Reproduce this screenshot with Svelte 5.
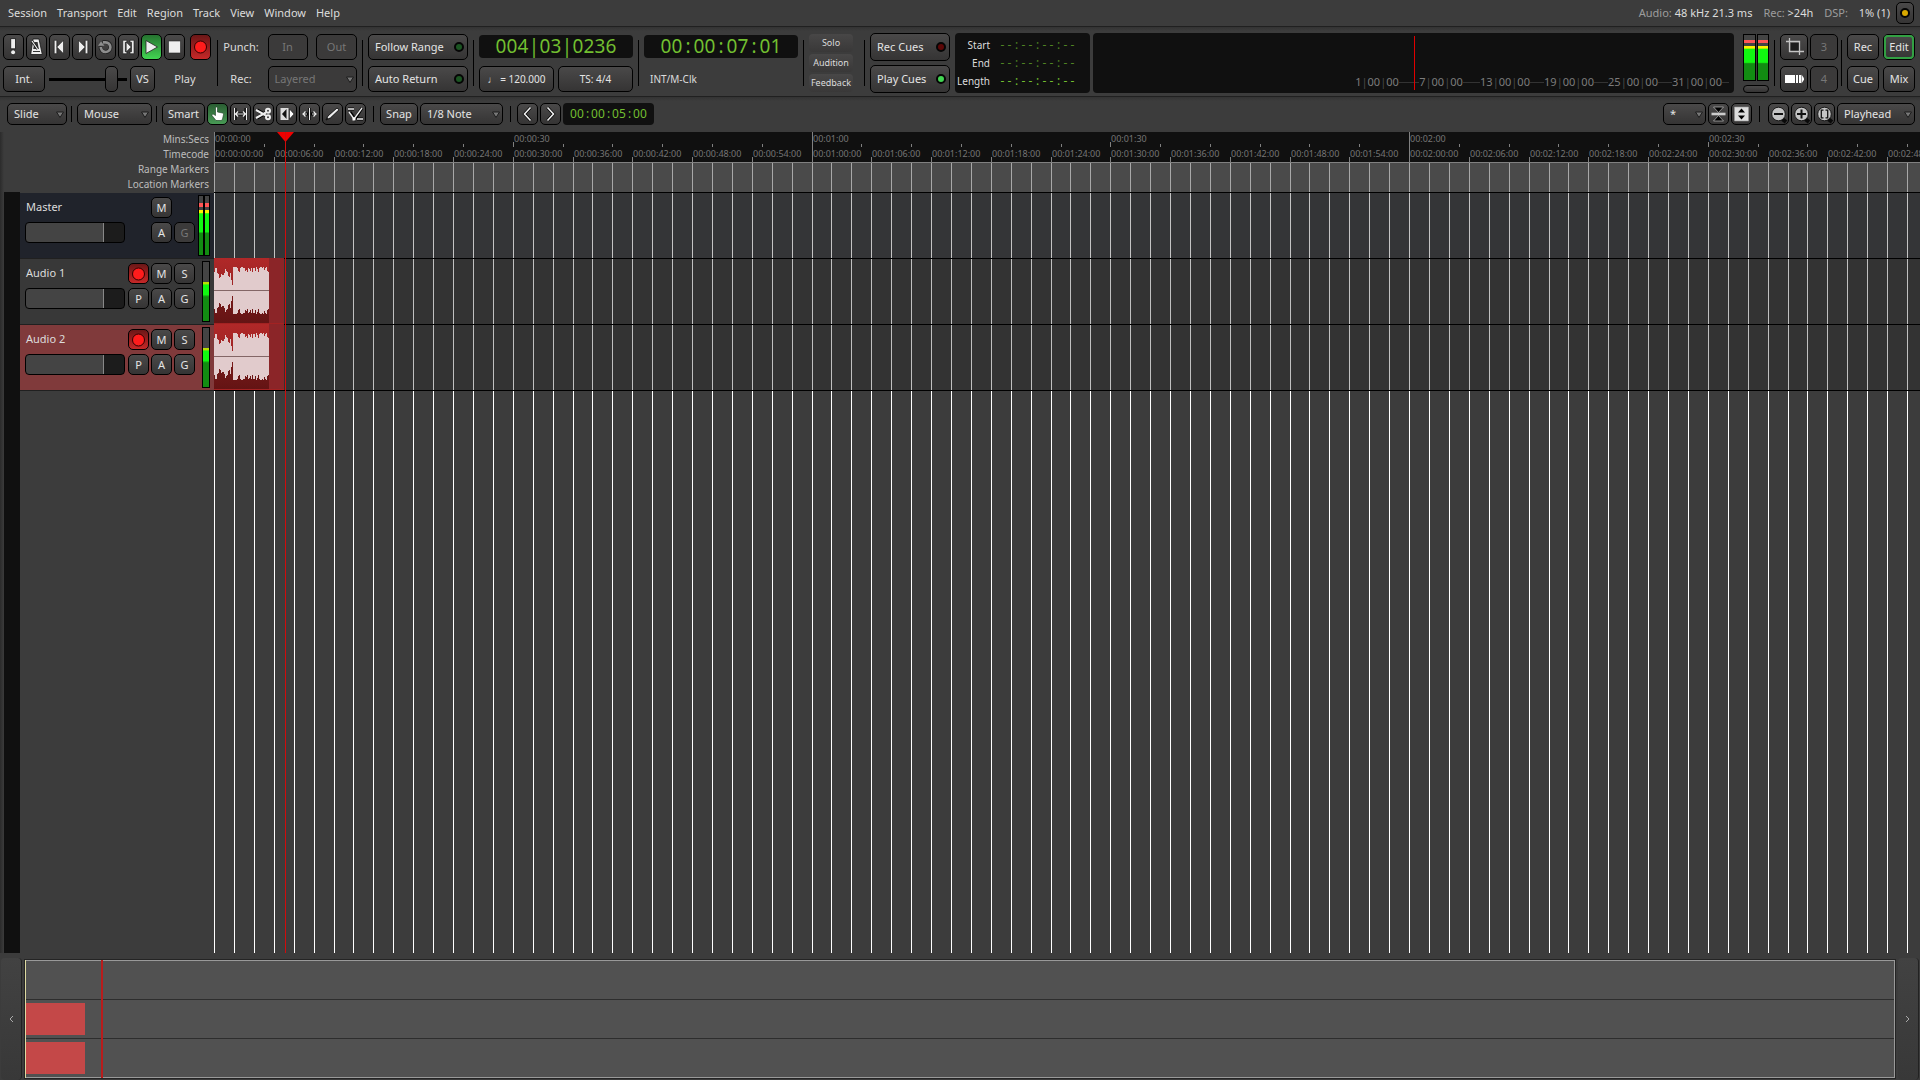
<script lang="ts">
  const menus = ['Session', 'Transport', 'Edit', 'Region', 'Track', 'View', 'Window', 'Help'];

  const transport = [
    { icon: 'panic', label: 'MIDI panic' },
    { icon: 'metronome', label: 'Metronome' },
    { icon: 'start', label: 'Go to start' },
    { icon: 'end', label: 'Go to end' },
    { icon: 'loop', label: 'Loop' },
    { icon: 'range', label: 'Play range' },
    { icon: 'play', label: 'Play', state: 'playing' },
    { icon: 'stop', label: 'Stop' },
    { icon: 'rec', label: 'Record', state: 'armed apart' }
  ];

  const tools = [
    { icon: 'grab', label: 'Grab', state: 'selected' },
    { icon: 'span', label: 'Range' },
    { icon: 'cut', label: 'Cut' },
    { icon: 'stretch', label: 'Stretch' },
    { icon: 'audition', label: 'Grid' },
    { icon: 'draw', label: 'Draw' },
    { icon: 'edit', label: 'Internal edit' }
  ];

  const ranges = [
    { name: 'Start', dim: true },
    { name: 'End', dim: true },
    { name: 'Length', dim: false }
  ];

  const bars = [1, 7, 13, 19, 25, 31];

  const tracks = [
    { name: 'Master', kind: 'master' },
    { name: 'Audio 1', kind: 'audio' },
    { name: 'Audio 2', kind: 'audio selected' }
  ];

  const rulers = ['Mins:Secs', 'Timecode', 'Range Markers', 'Location Markers'];

  // timeline scale
  const pps = 9.959;
  let width = $state(0);
  const at = (t: number) => Math.round(t * pps);
  const every = (step: number, total: number) =>
    Array.from({ length: Math.ceil(total / pps / step) }, (_, i) => i * step);
  const pad = (n: number) => String(n).padStart(2, '0');
  const clock = (t: number) => `00:${pad(Math.floor(t / 60))}:${pad(t % 60)}`;

  const playhead = 71;

  // peak heights of one channel, one value per pixel
  const peaks = [
    18, 22, 22, 17, 16, 12, 13, 16, 15, 15, 17, 21, 19, 18, 14, 13, 17, 10, 5,
    23, 23, 23, 23, 22, 19, 18, 22, 23, 23, 22, 22, 19, 20, 18, 22, 21, 19, 22,
    18, 22, 22, 19, 23, 21, 18, 22, 23, 23, 22, 23, 20, 22, 23, 19, 18
  ];
  const wave =
    'M0 32' +
    peaks.map((p, i) => `V${32 - p}H${i + 1}`).join('') +
    peaks.map((_, i) => `V${33 + peaks[54 - i]}H${54 - i}`).join('') +
    'Z';
</script>

{#snippet icon(name)}
  <svg class="icon" viewBox="0 0 19 20" width="19" height="20" aria-hidden="true">
    {#if name === 'panic'}
      <g fill="#eee" stroke="#111" stroke-width=".8"><path d="M6.7 1.6h4.8v10.2H6.7z" /><circle cx="9.1" cy="15.3" r="2.5" /></g>
    {:else if name === 'metronome'}
      <path d="M6 2h6l3.3 15.5H3.700z" fill="#eee" stroke="#111" stroke-width=".8" />
      <path d="M7.600 5h3l1.200 7H6.200z" fill="#333" />
      <path d="M10.500 12 5 4" stroke="#111" stroke-width="2.600" /><path d="M10.500 12 5 4" stroke="#eee" stroke-width="1.300" />
      <path d="M6 14.500h7" stroke="#333" />
    {:else if name === 'start'}
      <g fill="#eee" stroke="#111" stroke-width=".6"><path d="M4.200 3.300h2.600v13.400H4.200z" /><path d="M13.500 3.300v13.400L6.800 10z" /></g>
    {:else if name === 'end'}
      <g fill="#eee" stroke="#111" stroke-width=".6"><path d="M12.200 3.300h2.600v13.400h-2.600z" /><path d="M5.500 3.300v13.400l6.700-6.700z" /></g>
    {:else if name === 'loop'}
      <path d="M4.600 9.500A5 5 0 1 0 9.500 5H6.500" fill="none" stroke="#222" stroke-width="4" />
      <path d="M4.800 10A4.800 4.800 0 1 0 9.500 5.400H7" fill="none" stroke="#8d8d8d" stroke-width="2.600" />
      <path d="M2 8.800h6.500L5 4.500z" fill="#8d8d8d" />
    {:else if name === 'range'}
      <g fill="#eee" stroke="#111" stroke-width=".6"><path d="M3.800 3.300h4v2H6.300v9.400h1.500v2h-4z" /><path d="M11 3.300h4v13.400h-4v-2h1.500V5.300H11z" /><path d="M7.200 5v10l5-5z" /></g>
    {:else if name === 'play'}
      <path d="M4 3.500v13l11.500-6.500z" fill="#eee" stroke="#222" stroke-width=".8" />
    {:else if name === 'stop'}
      <path d="M3.500 4h12v12h-12z" fill="#eee" stroke="#222" stroke-width=".6" />
    {:else if name === 'rec'}
      <circle cx="9.500" cy="10" r="6" fill="#ff1c1c" stroke="#300" stroke-width="1" />
    {:else if name === 'grab'}
      <path d="M7.500 3.500q1-1 2 0V8l5 1q1 .4 1 1.500l-1 4.500-1 1.500H8l-4-5q0-2 1.500-1.200l2 1.200z" fill="#fff" stroke="#1a3a20" stroke-width=".6" />
    {:else if name === 'span'}
      <g fill="none" stroke="#000" stroke-width="3"><path d="M4 4v12M15 4v12M5 10h9" /></g>
      <g fill="none" stroke="#eee" stroke-width="1.200"><path d="M3.500 4v12M15.500 4v12M4 10h11M7 7.500 4.500 10 7 12.500M12 7.500l2.500 2.500-2.500 2.500" /></g>
    {:else if name === 'cut'}
      <g fill="none" stroke="#000" stroke-width="3.600"><path d="M3 6l10 6M3 14l10-6" /></g>
      <g fill="none" stroke="#eee" stroke-width="2"><path d="M2 6l10 5.500M2 14l10-5.500" /><circle cx="14" cy="6.800" r="2" /><circle cx="14" cy="13.200" r="2" /></g>
    {:else if name === 'stretch'}
      <path d="M3.500 4h8v12h-8z" fill="#ddd" /><path d="M9.500 5v10L5 10z" fill="#111" /><path d="M12.500 5v10l4.500-5z" fill="#fff" stroke="#111" stroke-width=".6" />
    {:else if name === 'audition'}
      <g fill="none" stroke="#000" stroke-width="3"><path d="M9.500 4v12M3 10h13" /></g>
      <g fill="none" stroke="#eee" stroke-width="1.200"><path d="M9.500 4v12M3 10h4M12 10h4M5.500 7.500 3 10l2.500 2.500M13.500 7.500 16 10l-2.500 2.500" /></g>
    {:else if name === 'draw'}
      <path d="M3 16l2-4L14 4l2 1.800-8.500 8z" fill="#eee" stroke="#000" stroke-width=".8" />
      <path d="M3 16l1-2.500 1.500 1.500z" fill="#111" />
    {:else if name === 'edit'}
      <g fill="none" stroke="#000" stroke-width="3"><path d="M2 5h6M4 8l5 7 7-11M11 15h6" /></g>
      <g fill="none" stroke="#eee" stroke-width="1.400"><path d="M2 5h6M3 8l5 7 8-11M11 15h6" /></g>
      <path d="M6.500 13.500h3v3h-3z" fill="#fff" />
    {:else if name === 'prev'}
      <path d="M12.500 3.500 6.500 10l6 6.500" fill="none" stroke="#000" stroke-width="3" /><path d="M12.500 3.500 6.500 10l6 6.500" fill="none" stroke="#eee" stroke-width="1.600" />
    {:else if name === 'next'}
      <path d="M6.500 3.500l6 6.500-6 6.500" fill="none" stroke="#000" stroke-width="3" /><path d="M6.500 3.500l6 6.500-6 6.500" fill="none" stroke="#eee" stroke-width="1.600" />
    {:else if name === 'crop'}
      <path d="M6 6h8v8H6z" fill="#1d1d1d" />
      <path d="M4.500 1v13.500H19M1 4.500h13.500V18" fill="none" stroke="#c4c4c4" stroke-width="1.300" />
    {:else if name === 'cueout'}
      <path d="M0 6h10v8H0zM11 6h2v8h-2zM14 6h2v8h-2z" fill="#fff" /><path d="M16.500 5.500v9l3-4.500z" fill="#fff" />
    {:else if name === 'shrink'}
      <path d="M4.500 3h10L9.500 8.500zM4.500 17h10l-5-5.500z" fill="#000" stroke="#bbb" stroke-width=".7" />
      <path d="M2.500 8.700h14v2.600h-14z" fill="#ccc" />
    {:else if name === 'expand'}
      <path d="M2.500 3h14v14h-14z" fill="#ddd" stroke="#999" stroke-width=".6" />
      <path d="M6 8.500h7l-3.500-4zM6 11.500h7l-3.500 4z" fill="#000" />
    {:else}
      <path d="M12 14l5 4" stroke="#0a0a0a" stroke-width="4" />
      <circle cx="9.500" cy="10" r="6.800" fill="#c4c4c4" stroke="#181818" stroke-width="1" />
      {#if name === 'out'}<path d="M5 9h9v2H5z" fill="#111" />{/if}
      {#if name === 'in'}<path d="M5 9h3.500V5.500h2V9H14v2h-3.500v3.500h-2V11H5z" fill="#111" />{/if}
      {#if name === 'fit'}<path d="M8.500 6.200H6.300v7.600h2.200M10.500 6.200h2.200v7.600h-2.200" fill="none" stroke="#111" stroke-width="1.300" />{/if}
    {/if}
  </svg>
{/snippet}

{#snippet readout(text)}
  {#each text.split('') as char}<span class="cell">{char}</span>{/each}
{/snippet}

{#snippet choice(value, label, size)}
  <label class="choice {size}">
    <select aria-label={label} disabled={size === 'layer'}>
      <option>{value}</option>
    </select>
    <svg viewBox="0 0 8 7" width="8" height="7" aria-hidden="true"><path d="M.5 1h7L4 6.500z" fill="#777" stroke="#1c1c1c" /></svg>
  </label>
{/snippet}

{#snippet meter(size)}
  <span class="meter {size}"><i></i></span>
{/snippet}

<div class="app">
  <header>
    <nav>
      {#each menus as menu}
        <button class="menu">{menu}</button>
      {/each}
    </nav>
    <div class="status">
      <span>Audio: <b>48 kHz 21.3 ms</b></span>
      <span>Rec: <b>&gt;24h</b></span>
      <span>DSP: <b class="load">1% (1)</b></span>
      <button class="btn log" aria-label="Log"><span class="led amber"></span></button>
    </div>
  </header>

  <section class="transport">
    <div class="stack main-controls">
      <div class="line">
        {#each transport as item}
          <button class="btn square {item.state ?? ''}" aria-label={item.label}>{@render icon(item.icon)}</button>
        {/each}
      </div>
      <div class="line">
        <button class="btn sync">Int.</button>
        <input class="shuttle" type="range" min="0" max="100" value="85" aria-label="Shuttle speed" />
        <button class="btn vs">VS</button>
        <span class="mode">Play</span>
      </div>
    </div>
    <hr />
    <div class="punch">
      <span>Punch:</span>
      <button class="btn" disabled>In</button>
      <button class="btn" disabled>Out</button>
      <span>Rec:</span>
      {@render choice('Layered', 'Record mode', 'layer')}
    </div>
    <hr />
    <div class="stack">
      <button class="btn lit follow">Follow Range<span class="led dark-green"></span></button>
      <button class="btn lit follow">Auto Return<span class="led dark-green"></span></button>
    </div>
    <hr />
    <div class="stack">
      <div class="display">{@render readout('004|03|0236')}</div>
      <div class="tempo">
        <button class="btn">♩ = 120.000</button>
        <button class="btn">TS: 4/4</button>
      </div>
    </div>
    <hr />
    <div class="stack">
      <div class="display">{@render readout('00:00:07:01')}</div>
      <span class="source">INT/M-Clk</span>
    </div>
    <hr />
    <div class="alerts">
      <button>Solo</button>
      <button>Audition</button>
      <button>Feedback</button>
    </div>
    <hr />
    <div class="stack cues">
      <button class="btn lit">Rec Cues<span class="led dark-red"></span></button>
      <button class="btn lit">Play Cues<span class="led green"></span></button>
    </div>
    <div class="ranges">
      {#each ranges as range}
        <span>{range.name}</span>
        <span class="small-clock" class:dim={range.dim}>{@render readout('--:--:--:--')}</span>
      {/each}
    </div>
    <div class="mini">
      {#each bars as bar}
        <span class="bar" class:first={bar === 1}>{bar}<i>|</i>00<i>|</i>00</span>
      {/each}
      <span class="needle"></span>
    </div>
    <div class="levels">
      <div>
        {@render meter('main')}
        {@render meter('main')}
      </div>
      <button class="btn peak" aria-label="Reset peak"></button>
    </div>
    <hr />
    <div class="pair scenes">
      <button class="btn" aria-label="Crop">{@render icon('crop')}</button>
      <button class="btn" disabled>3</button>
      <button class="btn" aria-label="Cue">{@render icon('cueout')}</button>
      <button class="btn" disabled>4</button>
    </div>
    <hr />
    <div class="pair views">
      <button class="btn">Rec</button>
      <button class="btn current">Edit</button>
      <button class="btn">Cue</button>
      <button class="btn">Mix</button>
    </div>
  </section>

  <section class="toolbar">
    {@render choice('Slide', 'Edit mode', 'slide')}
    <hr />
    {@render choice('Mouse', 'Edit point', 'mouse')}
    <hr />
    <div class="group">
      <button class="btn smart">Smart</button>
      {#each tools as tool}
        <button class="btn square {tool.state ?? ''}" aria-label={tool.label}>{@render icon(tool.icon)}</button>
      {/each}
    </div>
    <hr class="wide" />
    <div class="group">
      <button class="btn snap">Snap</button>
      {@render choice('1/8 Note', 'Grid', 'grid')}
    </div>
    <hr class="wide" />
    <div class="group">
      <button class="btn square" aria-label="Nudge back">{@render icon('prev')}</button>
      <button class="btn square" aria-label="Nudge forward">{@render icon('next')}</button>
      <div class="nudge small-clock">{@render readout('00:00:05:00')}</div>
    </div>
    <div class="group right">
      {@render choice('*', 'Visible tracks', 'star')}
      <button class="btn square" aria-label="Shrink tracks">{@render icon('shrink')}</button>
      <button class="btn square" aria-label="Expand tracks">{@render icon('expand')}</button>
    </div>
    <hr class="wide" />
    <div class="group">
      <button class="btn square" aria-label="Zoom out">{@render icon('out')}</button>
      <button class="btn square" aria-label="Zoom in">{@render icon('in')}</button>
      <button class="btn square" aria-label="Zoom to session">{@render icon('fit')}</button>
      {@render choice('Playhead', 'Zoom focus', 'focus')}
    </div>
  </section>

  <main>
    <aside>
      <div class="ruler-names">
        {#each rulers as ruler}
          <span>{ruler}</span>
        {/each}
      </div>
      <div class="headers">
        <div class="gutter"></div>
        <div class="heads">
          {#each tracks as track}
            <div class="head {track.kind}">
              <div class="controls">
                <span class="name">{track.name}</span>
                {#if track.kind !== 'master'}
                  <button class="btn square armed" aria-label="Record arm {track.name}">{@render icon('rec')}</button>
                {:else}
                  <span></span>
                {/if}
                <button class="btn square">M</button>
                {#if track.kind !== 'master'}
                  <button class="btn square">S</button>
                {:else}
                  <span></span>
                {/if}
                <input class="fader" type="range" min="0" max="100" value="79" aria-label="{track.name} level" />
                {#if track.kind !== 'master'}
                  <button class="btn square">P</button>
                {:else}
                  <span></span>
                {/if}
                <button class="btn square">A</button>
                <button class="btn square" disabled={track.kind === 'master'}>G</button>
              </div>
              <div class="meters">
                {#if track.kind === 'master'}
                  {@render meter('thin')}
                  {@render meter('thin')}
                {:else}
                  {@render meter('low')}
                {/if}
              </div>
            </div>
          {/each}
        </div>
      </div>
    </aside>

    <div class="canvas" bind:clientWidth={width}>
      <div class="ruler">
        {#each every(30, width) as t}
          <span class="mark" class:full={t % 60 === 0} style:left="{at(t)}px">{clock(t)}</span>
        {/each}
        {#each every(5, width) as t}
          <span class="tick" style:left="{at(t)}px"></span>
        {/each}
      </div>
      <div class="ruler">
        {#each every(6, width) as t}
          <span class="mark" class:full={t % 60 === 0} style:left="{at(t)}px">{clock(t)}:00</span>
        {/each}
      </div>
      <div class="markers"></div>
      {#each tracks as track}
        <div class="lane {track.kind}"></div>
      {/each}
      <svg class="grid" width="100%" height="100%" shape-rendering="crispEdges" aria-hidden="true">
        {#each every(2, width) as t}
          <rect x={at(t)} y="31" width="1" height="29" fill="#a8a8a8" />
          <rect x={at(t)} y="61" width="1" height="65" fill="#c4c4c4" />
          <rect x={at(t)} y="127" width="1" height="65" fill="#c0c0c0" />
          <rect x={at(t)} y="193" width="1" height="65" fill="#c0c0c0" />
          <rect x={at(t)} y="259" width="1" height="100%" fill="#fff" />
        {/each}
      </svg>
      {#each [1, 2] as n}
        <div class="region take{n}">
          <svg width="55" height="65" shape-rendering="crispEdges" aria-hidden="true">
            <path d={wave} fill="#e1cbcc" />
            <path d="M0 32h55v1H0z" fill="#836666" />
          </svg>
        </div>
      {/each}
      <svg class="playhead" style:left="{playhead - 8}px" width="17" height="10" aria-hidden="true"><path d="M0 0h17L8.500 10z" fill="#f00000" /></svg>
      <span class="playline" style:left="{playhead}px"></span>
    </div>
  </main>

  <footer>
    <button class="scroll" aria-label="Scroll left"><svg width="6" height="8" aria-hidden="true"><path d="M5 1 2 4l3 3" /></svg></button>
    <div class="summary">
      <div class="row"></div>
      <div class="row"><i></i></div>
      <div class="row"><i></i></div>
      <span class="here"></span>
    </div>
    <button class="scroll" aria-label="Scroll right"><svg width="6" height="8" aria-hidden="true"><path d="M1 1l3 3-3 3" /></svg></button>
  </footer>
</div>

<style>
  :global(body) {
    background: #3c3c3c;
  }

  .app {
    display: flex;
    flex-direction: column;
    min-height: 100vh;
    background: #3c3c3c;
    color: #dcdcdc;
    font: 11px/16px "Noto Sans", sans-serif;
    overflow: hidden;
  }

  .app * {
    box-sizing: border-box;
  }

  button,
  select,
  input {
    margin: 0;
    padding: 0;
    font: inherit;
    color: inherit;
  }

  .icon {
    display: block;
    flex: none;
  }

  header {
    display: flex;
    justify-content: space-between;
    align-items: center;
    height: 27px;
    padding: 0 6px 0 8px;
    border-bottom: 1px solid #202020;
  }

  nav {
    display: flex;
    gap: 10px;
  }

  .menu {
    border: 0;
    background: none;
  }

  .status {
    display: flex;
    align-items: center;
    gap: 11px;
    color: #9c9c9c;
  }

  .status b {
    font-weight: 400;
    color: #dcdcdc;
  }

  .status .load {
    margin-left: 8px;
  }

  .status .btn {
    margin-left: -5px;
  }

  .btn {
    display: flex;
    align-items: center;
    justify-content: center;
    border: 1px solid #000;
    border-radius: 5px;
    background: linear-gradient(#4a4949, #353434);
    color: #e4e4e4;
    white-space: nowrap;
  }

  .btn:disabled {
    background: #3b3a3a;
    color: #777;
  }

  .square {
    width: 21px;
  }

  .log {
    width: 18px;
    height: 22px;
  }

  .playing {
    background: linear-gradient(#267330, #42d552);
  }

  .armed {
    background: linear-gradient(#6b1717, #c62828);
  }

  .apart {
    margin-left: 3px;
  }

  .selected.btn {
    background: linear-gradient(#2b5e33, #489a55);
  }

  .led {
    flex: none;
    width: 10px;
    height: 10px;
    border: 2px solid #050505;
    border-radius: 50%;
  }

  .amber {
    background: #d9a900;
  }

  .green {
    background: #42d552;
  }

  .dark-green {
    background: #1b5522;
  }

  .dark-red {
    background: #5c0606;
  }

  .transport {
    display: flex;
    gap: 5px;
    height: 70px;
    padding: 6px 5px 3px 3px;
    border-bottom: 1px solid #202020;
    background: linear-gradient(#333, #3c3c3c 4px);
  }

  hr {
    flex: none;
    width: 1px;
    height: 46px;
    margin: 7px 0 0;
    border: 0;
    background: #000;
  }

  .stack {
    display: flex;
    flex-direction: column;
    gap: 6px;
    padding-top: 1px;
  }

  .stack .btn {
    height: 26px;
  }

  .main-controls {
    padding-right: 1px;
  }

  .line {
    display: flex;
    align-items: center;
    gap: 2px;
  }

  .sync {
    width: 42px;
  }

  .vs {
    width: 25px;
  }

  .mode {
    flex: 1;
    padding-left: 2px;
    text-align: center;
  }

  .shuttle {
    width: 81px;
    height: 26px;
    appearance: none;
    background: linear-gradient(#000, #000) center / 78px 3px no-repeat;
  }

  .shuttle::-webkit-slider-thumb {
    appearance: none;
    width: 13px;
    height: 26px;
    border: 1px solid #000;
    border-radius: 5px;
    background: linear-gradient(#4a4949, #353434);
  }

  .punch {
    display: grid;
    grid-template-columns: 36px 40px 41px;
    grid-template-rows: 26px 26px;
    row-gap: 6px;
    align-items: center;
    justify-items: center;
    justify-content: space-between;
    width: 134px;
    padding-top: 1px;
  }

  .punch .btn,
  .punch .choice {
    width: 100%;
    height: 26px;
  }

  .punch .btn:nth-child(2) {
    justify-self: start;
  }

  .punch .choice {
    grid-column: 2 / 4;
  }

  .lit {
    justify-content: space-between;
    padding: 0 3px 0 6px;
  }

  .follow {
    width: 100px;
  }

  .cell {
    display: inline-block;
    width: 11px;
    text-align: center;
  }

  .display {
    display: flex;
    justify-content: center;
    width: 154px;
    height: 23px;
    margin: 1px 0 2px;
    border-radius: 4px;
    background: #101010;
    color: #72bf30;
    font-size: 19px;
    line-height: 22px;
  }

  .tempo {
    display: flex;
    justify-content: space-between;
    font-size: 10px;
  }

  .tempo .btn {
    width: 75px;
  }

  .source {
    padding: 0 6px;
    font-size: 10px;
    line-height: 26px;
  }

  .alerts {
    display: flex;
    flex-direction: column;
    justify-content: space-between;
    width: 50px;
    padding: 1px 6px 1px 0;
  }

  .alerts button {
    height: 18px;
    border: 0;
    border-radius: 4px;
    background: linear-gradient(#484747, #393838);
    font-size: 9px;
  }

  .cues {
    gap: 4px;
    padding: 0;
  }

  .cues .btn {
    width: 80px;
    height: 28px;
  }

  .ranges {
    display: grid;
    grid-template-columns: 31px 77px;
    column-gap: 9px;
    justify-items: end;
    align-content: space-evenly;
    width: 135px;
    height: 60px;
    padding: 2px 14px 2px 4px;
    border-radius: 4px;
    background: #101010;
    font-size: 10px;
  }

  .small-clock {
    display: flex;
    color: #72bf30;
    font-size: 12px;
  }

  .small-clock .cell {
    width: 7px;
  }

  .dim {
    color: #4f8423;
  }

  .mini {
    position: relative;
    display: flex;
    flex: 1;
    align-items: flex-end;
    justify-content: flex-end;
    height: 60px;
    margin-left: -2px;
    padding: 0 5px 3px 0;
    border-radius: 4px;
    background: #101010;
    color: #7c7c7c;
    overflow: hidden;
  }

  .bar {
    display: flex;
    justify-content: center;
    width: 64px;
  }

  .bar::before,
  .bar::after {
    content: "";
    flex: 1;
    height: 1px;
    margin-top: 8px;
    background: #333;
  }

  .bar.first::before {
    background: none;
  }

  .bar i {
    color: #4a4a4a;
    font-style: normal;
  }

  .needle {
    position: absolute;
    top: 3px;
    left: 50%;
    width: 1px;
    height: 54px;
    background: #e00000;
  }

  .levels {
    width: 26px;
    margin: 1px 0 0 4px;
  }

  .levels div {
    display: flex;
    gap: 1px;
  }

  .peak {
    width: 26px;
    height: 8px;
    margin-top: 4px;
  }

  .meter {
    display: flex;
    align-items: flex-end;
    border: 1px solid #000;
    background: linear-gradient(#444 12%, #f55 12% 18%, #444 18%);
  }

  .meter i {
    width: 100%;
    height: 76%;
    background: linear-gradient(#ffef00 7%, #11f811 8% 48%, #128c12 52%);
  }

  .main {
    width: 13px;
    height: 47px;
  }

  .thin {
    width: 6px;
    height: 61px;
  }

  .low {
    width: 8px;
    height: 61px;
    background: #444;
  }

  .low i {
    height: 66%;
    background: linear-gradient(#b8e000 4%, #11f811 8% 32%, #128c12 38%);
  }

  .pair {
    display: grid;
    grid-template-rows: 26px 26px;
    row-gap: 6px;
    padding-top: 1px;
  }

  .scenes {
    grid-template-columns: 28px 28px;
    column-gap: 2px;
    margin-right: -2px;
  }

  .views {
    grid-template-columns: 32px 32px;
    column-gap: 4px;
  }

  .current {
    outline: 2px solid #32a043;
    outline-offset: -3px;
  }

  .choice {
    position: relative;
    display: flex;
    align-items: center;
    height: 22px;
  }

  .choice select {
    width: 100%;
    height: 100%;
    padding: 0 6px;
    appearance: none;
    border: 1px solid #000;
    border-radius: 5px;
    background: linear-gradient(#4a4949, #353434);
    color: #e4e4e4;
    opacity: 1;
  }

  .choice select:disabled {
    background: #3b3a3a;
    color: #777;
  }

  .choice svg {
    position: absolute;
    right: 3px;
    pointer-events: none;
  }

  .slide {
    width: 60px;
  }

  .mouse {
    width: 75px;
  }

  .grid.choice {
    width: 83px;
  }

  .star {
    width: 43px;
  }

  .focus {
    width: 78px;
  }

  .toolbar {
    display: flex;
    gap: 4px;
    height: 35px;
    padding: 6px 5px 7px 7px;
    background: linear-gradient(#333, #3c3c3c 4px);
  }

  .toolbar hr {
    height: 16px;
    margin: 3px 1px 0 0;
  }

  .toolbar .wide {
    margin: 3px 2px 0 3px;
  }

  .toolbar .wide:last-of-type {
    margin-right: 4px;
  }

  .group {
    display: flex;
    gap: 2px;
  }

  .group .btn {
    height: 22px;
  }

  .smart {
    width: 43px;
  }

  .snap {
    width: 38px;
  }

  .right {
    margin-left: auto;
  }

  .nudge {
    align-items: center;
    justify-content: center;
    width: 91px;
    border-radius: 4px;
    background: #101010;
  }

  main {
    display: flex;
    flex: 1;
    margin-bottom: 5px;
  }

  aside {
    display: flex;
    flex-direction: column;
    width: 214px;
    background: linear-gradient(90deg, #2b2b2b, #3c3c3c 4px);
  }

  .ruler-names {
    display: flex;
    flex-direction: column;
    align-items: flex-end;
    padding-right: 5px;
    color: #bdbdbd;
    font-size: 10px;
    line-height: 15px;
  }

  .headers {
    display: flex;
    flex: 1;
    padding-left: 4px;
  }

  .gutter {
    width: 16px;
    background: #101010;
  }

  .heads {
    flex: 1;
    padding-top: 1px;
  }

  .head {
    display: flex;
    justify-content: space-between;
    height: 66px;
    padding: 4px 4px 0 5px;
    border-bottom: 1px solid #202020;
    background: #383838;
  }

  .head.master {
    background: #20232b;
  }

  .head.selected {
    background: #803a3b;
  }

  .controls {
    display: grid;
    grid-template-columns: 101px 21px 21px 21px;
    grid-template-rows: 21px 21px;
    column-gap: 2px;
    row-gap: 4px;
  }

  .name {
    padding-left: 1px;
    line-height: 20px;
  }

  .fader {
    width: 100px;
    height: 21px;
    appearance: none;
    border: 1px solid #000;
    border-radius: 4px;
    background: linear-gradient(90deg, #444 79%, #888 79% 80%, #1c1c1c 80%);
  }

  .fader::-webkit-slider-thumb {
    appearance: none;
    width: 1px;
    height: 19px;
    background: #888;
  }

  .meters {
    display: flex;
    margin-top: -2px;
  }

  .canvas {
    position: relative;
    flex: 1;
    min-width: 0;
    overflow: hidden;
  }

  .ruler {
    position: relative;
    height: 16px;
    margin-bottom: -1px;
    border-bottom: 1px solid #808080;
    background: #101010;
    color: #757575;
    font-size: 9px;
    line-height: 14px;
  }

  .mark {
    position: absolute;
    top: 0;
    height: 15px;
    padding-left: 1px;
    background: linear-gradient(#808080, #808080) bottom left / 1px 5px no-repeat;
  }

  .full {
    background-size: 1px 15px;
  }

  .tick {
    position: absolute;
    bottom: 0;
    width: 1px;
    height: 3px;
    background: #808080;
  }

  .markers {
    height: 31px;
    border-top: 1px solid #808080;
    border-bottom: 1px solid #000;
    background: #4a4a4a;
  }

  .lane {
    height: 66px;
    border-bottom: 1px solid #000;
    background: #333;
  }

  .lane.master {
    background: #343537;
  }

  svg.grid {
    position: absolute;
    top: 0;
    left: 0;
  }

  .region {
    position: absolute;
    left: 0;
    width: 70px;
    height: 66px;
    border-bottom: 1px solid #a32222;
    background: linear-gradient(#8b2528, #8b2528) right / 15px 100% no-repeat, linear-gradient(#b02828, #9c2424 48%, #7a1a1a 52%, #641414);
  }

  .take1 {
    top: 126px;
  }

  .take2 {
    top: 192px;
  }

  .playhead {
    position: absolute;
    top: 0;
  }

  .playline {
    position: absolute;
    top: 0;
    bottom: 0;
    width: 1px;
    background: #d00c0c;
  }

  footer {
    display: flex;
    gap: 2px;
    height: 122px;
    padding: 0 1px;
  }

  .scroll {
    width: 21px;
    border: 0;
    border-right: 1px solid #222;
    border-radius: 4px;
    background: linear-gradient(#424242, #383838);
  }

  .scroll svg {
    fill: none;
    stroke: #aaa;
  }

  .summary {
    position: relative;
    flex: 1;
    margin: 1px 0;
    padding: 1px 1px 0 0;
    border: 1px solid #242424;
    box-shadow: inset 1px 0 #ddd9a0, inset 0 0 0 1px #999;
    background: #515151;
  }

  .row {
    display: flex;
    height: 39px;
    margin-left: 1px;
    border-bottom: 1px solid #2d2d2d;
  }

  .row:nth-child(3) {
    border-bottom: 0;
  }

  .row i {
    width: 59px;
    height: 32px;
    margin-top: 3px;
    background: #c44848;
  }

  .here {
    position: absolute;
    top: 0;
    bottom: 0;
    left: 76px;
    width: 2px;
    background: #b81c1c;
  }
</style>
